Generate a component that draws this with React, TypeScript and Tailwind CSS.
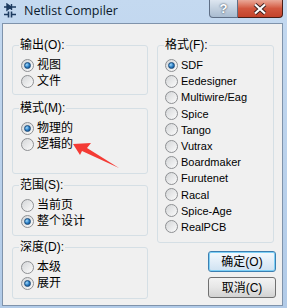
import React from 'react';

const font = "font-['Liberation_Sans','Noto_Sans_CJK_SC',sans-serif]";

const Radio = ({ on }: { on?: boolean }) => (
  <span className="flex h-[13px] w-[13px] shrink-0 items-center justify-center rounded-full border border-[#8e9093] bg-linear-to-br from-[#d4d6d8] to-[#fbfbfb]">
    {on && (
      <span className="h-[7px] w-[7px] rounded-full border border-[#1a4c7c] bg-[radial-gradient(circle_at_35%_35%,#a6dcfb,#2c80c8_50%,#0e3d70)]" />
    )}
  </span>
);

const Item = ({ on, label, latin }: { on?: boolean; label: string; latin?: boolean }) => (
  <div className="flex h-[16px] items-center gap-[3px]">
    <Radio on={on} />
    <span className={latin ? 'text-[11px] leading-[14px]' : 'text-[12px] leading-[14px]'}>{label}</span>
  </div>
);

interface GroupProps {
  label: string;
  className: string;
  rows: string;
  children: React.ReactNode;
}

const Group = ({ label, className, rows, children }: GroupProps) => (
  <div className={`rounded-[3px] border border-[#d5dfe5] ${className}`}>
    <div className="-mt-[8px] ml-[6px] w-fit bg-[#f0f0f0] px-[1px] text-[12px] leading-[14px]">{label}</div>
    <div className={`mt-[5px] flex flex-col ${rows}`}>{children}</div>
  </div>
);

const formats = ['SDF', 'Eedesigner', 'Multiwire/Eag', 'Spice', 'Tango', 'Vutrax', 'Boardmaker', 'Furutenet', 'Racal', 'Spice-Age', 'RealPCB'];

export default function App() {
  return (
    <div className={`relative h-[308px] w-[287px] overflow-hidden bg-linear-to-b from-[#c4d9f0] to-[#b2cbe8] text-black ${font}`}>
      {/* title bar */}
      <div className="flex h-[23px] items-start">
        <svg className="ml-[4px] mt-[3px]" width="12" height="15" viewBox="0 0 12 15">
          <path d="M0 4h12M3 1l4 3-4 3zM7.5 1v6" stroke="#1d3b60" strokeWidth="1.4" fill="#1d3b60" />
          <path d="M0 11.5h4M8 11.5h4M4.5 8.5v6M7.5 8.5v6" stroke="#1d3b60" strokeWidth="1.6" fill="none" />
        </svg>
        <span className="ml-[8px] mt-[3px] font-['Open_Sans',sans-serif] text-[12.5px] leading-[16px] text-[#0c1a2c]">Netlist Compiler</span>
        <div className="ml-auto mr-[4px] flex">
          <div className="flex h-[18px] w-[29px] items-center justify-center rounded-bl-[4px] border border-t-0 border-[#5f6f86] bg-linear-to-b from-[#dde6f0] via-[#c2d0df] to-[#a9bbd0] text-[13px] font-bold leading-none text-white [text-shadow:0_0_2px_#1d2a3a]">
            ?
          </div>
          <div className="flex h-[18px] w-[45px] items-center justify-center rounded-br-[4px] border border-l-0 border-t-0 border-[#4a1d16] bg-linear-to-b from-[#e9a898] via-[#d2573f] to-[#c3432b]">
            <svg width="14" height="12" viewBox="0 0 14 12">
              <path d="M2 1.5l10 9M12 1.5l-10 9" stroke="#3a2020" strokeWidth="4" />
              <path d="M2 1.5l10 9M12 1.5l-10 9" stroke="#fff" strokeWidth="2.2" />
            </svg>
          </div>
        </div>
      </div>

      {/* client area */}
      <div className="ml-[2px] h-[283px] w-[281px] border border-[#7f93ab] bg-[#f0f0f0]">
        <div className="flex gap-[9px] pl-[9px] pt-[21px]">
          <div className="flex w-[136px] flex-col">
            <Group label="输出(O):" className="h-[50px]" rows="pl-[8px]">
              <Item on label="视图" />
              <Item label="文件" />
            </Group>
            <Group label="模式(M):" className="mt-[13px] h-[66px]" rows="pl-[8px]">
              <Item on label="物理的" />
              <Item label="逻辑的" />
            </Group>
            <Group label="范围(S):" className="mt-[11px] h-[51px]" rows="pl-[8px]">
              <Item label="当前页" />
              <Item on label="整个设计" />
            </Group>
            <Group label="深度(D):" className="mt-[11px] h-[52px]" rows="pl-[8px]">
              <Item label="本级" />
              <Item on label="展开" />
            </Group>
          </div>
          <div className="flex w-[117px] flex-col">
            <Group label="格式(F):" className="h-[198px]" rows="pl-[7px] [&>div]:h-[16.2px]">
              {formats.map((f, i) => (
                <Item key={f} on={i === 0} label={f} latin />
              ))}
            </Group>
            <button className="ml-[51px] mt-[8px] flex h-[21px] w-[68px] items-center justify-center rounded-[3px] border border-[#3c7fb1] bg-linear-to-b from-[#f4f9fd] via-[#e3eef8] to-[#cfe2f2] text-[12px] leading-none shadow-[inset_0_0_0_1px_#7ed0f6]">
              确定(O)
            </button>
            <button className="ml-[51px] mt-[5px] flex h-[21px] w-[68px] items-center justify-center rounded-[3px] border border-[#707070] bg-linear-to-b from-[#f3f3f3] via-[#e6e6e6] to-[#d2d2d2] text-[12px] leading-none">
              取消(C)
            </button>
          </div>
        </div>
      </div>

      {/* red annotation arrow */}
      <svg className="pointer-events-none absolute inset-0" width="287" height="308" viewBox="0 0 287 308">
        <polygon points="73,144 91,143 87,148 119,168 82,151 80,155" fill="#f43b35" />
      </svg>
    </div>
  );
}
